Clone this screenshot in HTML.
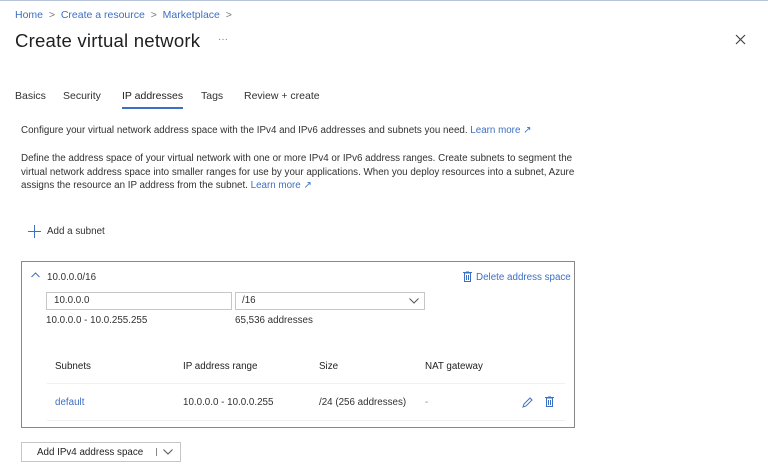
<!DOCTYPE html>
<html><head><meta charset="utf-8"><style>
*{margin:0;padding:0;box-sizing:border-box}
body{width:768px;height:474px;background:#fff;font-family:"Liberation Sans",sans-serif;color:#323130;position:relative;overflow:hidden;font-size:10px}
.a{position:absolute;white-space:nowrap}
.s{font-size:9.8px}
</style></head><body>
<div class="a" style="left:0;top:0;width:768px;height:1px;background:#b6c3d9"></div>
<div class="a" style="left:15px;top:9px;font-size:10.5px;color:#3d6fc2">Home &nbsp;<span style="color:#777">&gt;</span>&nbsp; Create a resource &nbsp;<span style="color:#777">&gt;</span>&nbsp; Marketplace &nbsp;<span style="color:#777">&gt;</span></div>
<div class="a" style="left:15px;top:30px;font-size:18.6px;color:#201f1e;letter-spacing:0.2px">Create virtual network</div>
<div class="a" style="left:218px;top:34px;font-size:10px;color:#777">···</div>
<svg class="a" style="left:735px;top:34px" width="11" height="11"><path d="M1 1L10 10M10 1L1 10" stroke="#444" stroke-width="1.2"/></svg>
<div class="a" style="left:15px;top:90px;font-size:10.5px">Basics</div>
<div class="a" style="left:63px;top:90px;font-size:10.5px">Security</div>
<div class="a" style="left:122px;top:90px;font-size:10.5px;color:#201f1e">IP addresses</div>
<div class="a" style="left:122px;top:107px;width:61px;height:2px;background:#3d6fc2"></div>
<div class="a" style="left:201px;top:90px;font-size:10.5px">Tags</div>
<div class="a" style="left:244px;top:90px;font-size:10.5px">Review + create</div>
<div class="a s" style="left:21px;top:125px">Configure your virtual network address space with the IPv4 and IPv6 addresses and subnets you need. <span style="color:#3d6fc2">Learn more ↗</span></div>
<div class="a s" style="left:21px;top:153px">Define the address space of your virtual network with one or more IPv4 or IPv6 address ranges. Create subnets to segment the</div>
<div class="a s" style="left:21px;top:167px">virtual network address space into smaller ranges for use by your applications. When you deploy resources into a subnet, Azure</div>
<div class="a s" style="left:21px;top:180px">assigns the resource an IP address from the subnet. <span style="color:#3d6fc2">Learn more ↗</span></div>
<svg class="a" style="left:28px;top:225px" width="13" height="13"><path d="M6.5 0V13M0 6.5H13" stroke="#3d6fc2" stroke-width="1"/></svg>
<div class="a s" style="left:47px;top:226px">Add a subnet</div>
<div class="a" style="left:21px;top:261px;width:554px;height:167px;border:1px solid #8a8886"></div>
<svg class="a" style="left:31px;top:272px" width="9" height="6"><path d="M0.5 5L4.5 1L8.5 5" stroke="#3d6fc2" fill="none"/></svg>
<div class="a s" style="left:47px;top:272px">10.0.0.0/16</div>
<svg class="a" style="left:463px;top:271px" width="9" height="11"><rect x="1.5" y="2" width="6" height="8.5" fill="none" stroke="#3d6fc2"/><path d="M0 1.5H9M3 0H6M3.5 4V9M5.5 4V9" stroke="#3d6fc2"/></svg>
<div class="a s" style="left:476px;top:272px;color:#3d6fc2">Delete address space</div>
<div class="a" style="left:46px;top:292px;width:186px;height:18px;border:1px solid #c8c6c4"></div>
<div class="a s" style="left:54px;top:295px">10.0.0.0</div>
<div class="a" style="left:235px;top:292px;width:190px;height:18px;border:1px solid #c8c6c4"></div>
<div class="a s" style="left:242px;top:295px">/16</div>
<svg class="a" style="left:409px;top:298px" width="10" height="6"><path d="M0.5 0.5L5 5L9.5 0.5" stroke="#555" fill="none"/></svg>
<div class="a s" style="left:46px;top:315px">10.0.0.0 - 10.0.255.255</div>
<div class="a s" style="left:235px;top:315px">65,536 addresses</div>
<div class="a s" style="left:55px;top:361px;color:#201f1e">Subnets</div>
<div class="a s" style="left:183px;top:361px;color:#201f1e">IP address range</div>
<div class="a s" style="left:319px;top:361px;color:#201f1e">Size</div>
<div class="a s" style="left:425px;top:361px;color:#201f1e">NAT gateway</div>
<div class="a" style="left:47px;top:383px;width:518px;height:1px;background:#f0f0f0"></div>
<div class="a" style="left:47px;top:420px;width:518px;height:1px;background:#f0f0f0"></div>
<div class="a s" style="left:55px;top:397px;color:#3d6fc2">default</div>
<div class="a s" style="left:183px;top:397px">10.0.0.0 - 10.0.0.255</div>
<div class="a s" style="left:319px;top:397px">/24 (256 addresses)</div>
<div class="a s" style="left:425px;top:397px;color:#888">-</div>
<svg class="a" style="left:522px;top:397px" width="11" height="11"><path d="M1 10L2 7L8 1L10 3L4 9Z" stroke="#3d6fc2" fill="none"/></svg>
<svg class="a" style="left:545px;top:396px" width="9" height="11"><rect x="1.5" y="2" width="6" height="8.5" fill="none" stroke="#3d6fc2"/><path d="M0 1.5H9M3 0H6M3.5 4V9M5.5 4V9" stroke="#3d6fc2"/></svg>
<div class="a" style="left:21px;top:442px;width:160px;height:20px;border:1px solid #c8c6c4"></div>
<div class="a s" style="left:37px;top:447px;color:#201f1e">Add IPv4 address space</div>
<div class="a" style="left:156px;top:448px;width:1px;height:8px;background:#888"></div>
<svg class="a" style="left:163px;top:449px" width="10" height="6"><path d="M0.5 0.5L5 5L9.5 0.5" stroke="#555" fill="none"/></svg>
</body></html>
